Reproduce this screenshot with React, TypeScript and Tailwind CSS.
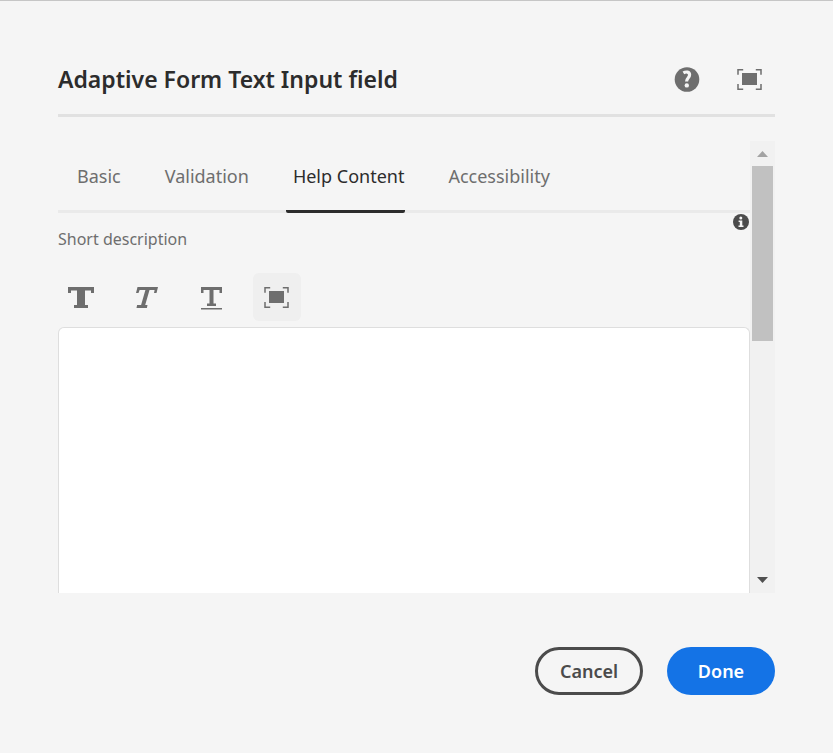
import { useState } from "react";

function FullScreenIcon() {
  return (
    <svg width="26" height="24" viewBox="0 0 26 24" aria-hidden="true">
      <rect x="5" y="6" width="15" height="12" fill="#6e6e6e" />
      <path
        d="M1 7.700V2.700h5.200M18.800 2.700H24v5M24 17v5.300h-5.200M6.200 22.300H1V17"
        fill="none"
        stroke="#6e6e6e"
        strokeWidth="1.500"
      />
    </svg>
  );
}

function BoldIcon() {
  return (
    <svg width="28" height="22" viewBox="0 -1 28 22" aria-hidden="true" fill="#6e6e6e">
      <path d="M0 0h26v6h-3V3.500h-6V18h3v3H6v-3h3V3.500H3V6H0z" />
    </svg>
  );
}

function ItalicIcon() {
  return (
    <svg width="28" height="22" viewBox="0 -1 28 22" aria-hidden="true" fill="#6e6e6e">
      <path d="M4.500 0H25l-1.500 6h-2.500l.6-3h-5.100l-4.300 15h2.300l-.6 3H3.500l.6-3h4l4.300-15H6.600L5.500 6H3z" />
    </svg>
  );
}

function UnderlineIcon() {
  return (
    <svg width="22" height="26" viewBox="0 -3 22 26" aria-hidden="true" fill="#6e6e6e">
      <path d="M0 0h21v6h-2.500V3h-6v13.500H15V19H6v-2.500h2.500V3h-6v3H0zM0 21h21v1.600H0z" />
    </svg>
  );
}

function HelpIcon() {
  return (
    <svg width="26" height="26" viewBox="0 0 26 26" aria-hidden="true">
      <circle cx="13" cy="13.500" r="12.300" fill="#6e6e6e" />
      <path
        d="M9.400 6.900c2.600-1.500 6.200-1.200 6.200 1.900 0 3.200-3 3.200-3 6.600"
        fill="none"
        stroke="#f5f5f5"
        strokeWidth="3.200"
      />
      <circle cx="12.800" cy="19.400" r="2.200" fill="#f5f5f5" />
    </svg>
  );
}

function InfoIcon() {
  return (
    <svg width="16" height="16" viewBox="0 0 16 16" aria-hidden="true">
      <circle cx="8" cy="8" r="8" fill="#4b4b4b" />
      <circle cx="7.800" cy="4" r="1.500" fill="#f5f5f5" />
      <path d="M5.600 6.500h3.700v5h1.200V13H5.500v-1.500h1.300V8H5.600z" fill="#f5f5f5" />
    </svg>
  );
}

const tabs = ["Basic", "Validation", "Help Content", "Accessibility"];

const tools = [
  { label: "Bold", icon: <BoldIcon />, filled: false },
  { label: "Italic", icon: <ItalicIcon />, filled: false },
  { label: "Underline", icon: <UnderlineIcon />, filled: false },
  { label: "Full screen editor", icon: <FullScreenIcon />, filled: true },
];

export default function App() {
  const [active, setActive] = useState("Help Content");

  return (
    <main className="flex h-screen flex-col border-t border-[#c6c6c6] bg-[#f5f5f5] px-[58px] pb-[58px] font-['Noto_Sans','Open_Sans',sans-serif] text-[#6e6e6e]">
      <header className="flex h-[116px] shrink-0 items-center justify-between border-b-3 border-[#e1e1e1] pt-[43px]">
        <h1 className="text-[23px] leading-8 font-semibold text-[#2c2c2c]">Adaptive Form Text Input field</h1>
        <div className="flex items-center gap-[37px] pr-3">
          <button type="button" aria-label="Help"><HelpIcon /></button>
          <button type="button" aria-label="Full screen"><FullScreenIcon /></button>
        </div>
      </header>

      <div className="mt-6 flex min-h-0 flex-1">
        <section className="flex min-w-0 flex-1 flex-col overflow-hidden">
          <div role="tablist" className="flex h-[72px] shrink-0 gap-9 border-b-3 border-[#eaeaea] pl-3">
            {tabs.map((tab) => (
              <button
                key={tab}
                type="button"
                role="tab"
                aria-selected={tab === active}
                onClick={() => setActive(tab)}
                className={`-mb-[3px] flex rounded-b-xs border-b-3 pt-[21px] pr-px pl-[7px] text-lg leading-7 whitespace-nowrap ${
                  tab === active ? "border-[#2c2c2c] text-[#2c2c2c]" : "border-transparent"
                }`}
              >
                {tab}
              </button>
            ))}
          </div>

          <div className="relative pt-3">
            <label htmlFor="short-description" className="block h-12 text-base leading-7">
              Short description
            </label>
            <button type="button" aria-label="More information" className="absolute top-px right-px">
              <InfoIcon />
            </button>
          </div>

          <div role="toolbar" aria-label="Text formatting" className="flex gap-[17px]">
            {tools.map((tool) => (
              <button
                key={tool.label}
                type="button"
                aria-label={tool.label}
                className={`flex size-12 items-center justify-center rounded-md ${tool.filled ? "bg-[#efefef]" : ""}`}
              >
                {tool.icon}
              </button>
            ))}
          </div>

          <textarea
            id="short-description"
            className="mt-[6px] min-h-0 w-full flex-1 resize-none rounded-t-md border border-b-0 border-[#dedede] bg-white p-3 outline-none"
          />
        </section>

        <div className="flex w-[25px] shrink-0 flex-col items-center bg-[#f1f1f1]">
          <button type="button" aria-label="Scroll up" className="flex h-[25px] w-full shrink-0 items-center justify-center">
            <svg width="11" height="6" viewBox="0 0 11 6" aria-hidden="true"><path d="M0 6 5.500 0 11 6z" fill="#a3a3a3" /></svg>
          </button>
          <div className="flex w-full flex-1 justify-center">
            <div className="h-[175px] w-[21px] bg-[#c1c1c1]" />
          </div>
          <button type="button" aria-label="Scroll down" className="flex h-[26px] w-full shrink-0 items-center justify-center">
            <svg width="11" height="6" viewBox="0 0 11 6" aria-hidden="true"><path d="M0 0h11L5.500 6z" fill="#505050" /></svg>
          </button>
        </div>
      </div>

      <footer className="mt-[54px] flex shrink-0 justify-end gap-6">
        <button type="button" className="h-12 w-[108px] rounded-full border-3 border-[#4b4b4b] text-lg font-semibold text-[#4b4b4b]">
          Cancel
        </button>
        <button type="button" className="h-12 w-[108px] rounded-full bg-[#1473e6] text-lg font-semibold text-white">
          Done
        </button>
      </footer>
    </main>
  );
}
